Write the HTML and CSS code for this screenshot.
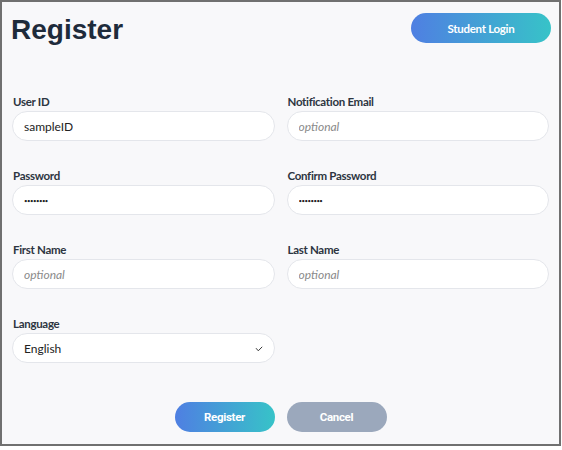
FILE: index.html
```html
<!DOCTYPE html>
<html lang="en">
<head>
<meta charset="utf-8">
<title>Register</title>
<link rel="stylesheet" href="styles.css">
</head>
<body>
<div class="frame">
  <div class="header">
    <h1 class="title">Register</h1>
    <button class="btn btn-grad btn-login" type="button">Student Login</button>
  </div>
  <form class="form">
    <div class="grid">
      <div class="field">
        <label class="label">User ID</label>
        <input class="input" type="text" value="sampleID">
      </div>
      <div class="field">
        <label class="label">Notification Email</label>
        <input class="input" type="text" placeholder="optional">
      </div>
      <div class="field">
        <label class="label">Password</label>
        <input class="input pw" type="password" value="password">
      </div>
      <div class="field">
        <label class="label">Confirm Password</label>
        <input class="input pw" type="password" value="password">
      </div>
      <div class="field">
        <label class="label">First Name</label>
        <input class="input" type="text" placeholder="optional">
      </div>
      <div class="field">
        <label class="label">Last Name</label>
        <input class="input" type="text" placeholder="optional">
      </div>
      <div class="field">
        <label class="label">Language</label>
        <div class="select-wrap">
          <select class="input select">
            <option>English</option>
          </select>
          <svg class="chev" width="8" height="6" viewBox="0 0 8 6"><path d="M1 2.2 L3.3 4.8 L7.2 0.8" fill="none" stroke="#3a3a3a" stroke-width="1"/></svg>
        </div>
      </div>
    </div>
    <div class="actions">
      <button class="btn btn-grad btn-act" type="button">Register</button>
      <button class="btn btn-cancel btn-act" type="button">Cancel</button>
    </div>
  </form>
</div>
</body>
</html>
```

FILE: styles.css
```css
* { box-sizing: border-box; }
body {
  margin: 0;
  background: #ffffff;
  font-family: Lato, "Noto Sans", sans-serif;
}
.frame {
  width: 561px;
  height: 446px;
  border: 2px solid #707070;
  background: #f8f8fa;
  padding: 11px 10px 0 10px;
}
.header {
  display: flex;
  justify-content: space-between;
  align-items: flex-start;
  margin-right: -2px;
}
.title {
  margin: 2px 0 0 -1px;
  font-family: "Liberation Sans", Arial, sans-serif;
  font-weight: 700;
  font-size: 28px;
  line-height: 30px;
  color: #1e2b3b;
}
.btn {
  border: none;
  height: 30px;
  border-radius: 15px;
  color: #ffffff;
  font-weight: 700;
  font-size: 11.5px;
  letter-spacing: -0.3px;
  cursor: pointer;
  padding: 0;
}
.btn-grad {
  background: linear-gradient(90deg, #4f7fe2 0%, #37c3c8 100%);
}
.btn-login {
  width: 140px;
  font-family: Lato, sans-serif;
}
.form { margin-top: 49px; }
.grid {
  display: grid;
  grid-template-columns: 1fr 1fr;
  column-gap: 12px;
  row-gap: 27px;
}
.field {
  display: flex;
  flex-direction: column;
}
.label {
  height: 16px;
  line-height: 16px;
  margin-bottom: 1px;
  font-size: 11.5px;
  letter-spacing: -0.3px;
  font-weight: 700;
  color: #2d3541;
  padding-left: 1px;
}
.input {
  height: 30px;
  border: 1px solid #e4e6eb;
  border-radius: 15px;
  background: #ffffff;
  padding: 0 11px;
  font-family: Lato, sans-serif;
  font-size: 12px;
  color: #222222;
  outline: none;
  width: 100%;
}
.input::placeholder {
  font-style: italic;
  color: #8a8a8a;
}
.pw {
  font-size: 6px;
  letter-spacing: -0.5px;
}
.select-wrap { position: relative; }
.select {
  appearance: none;
  -webkit-appearance: none;
}
.chev {
  position: absolute;
  right: 12px;
  top: 13px;
}
.actions {
  display: flex;
  justify-content: center;
  gap: 12px;
  margin-top: 39px;
}
.btn-act {
  width: 100px;
  font-family: Roboto, sans-serif;
}
.btn-cancel { background: #9ba8bc; }
```
